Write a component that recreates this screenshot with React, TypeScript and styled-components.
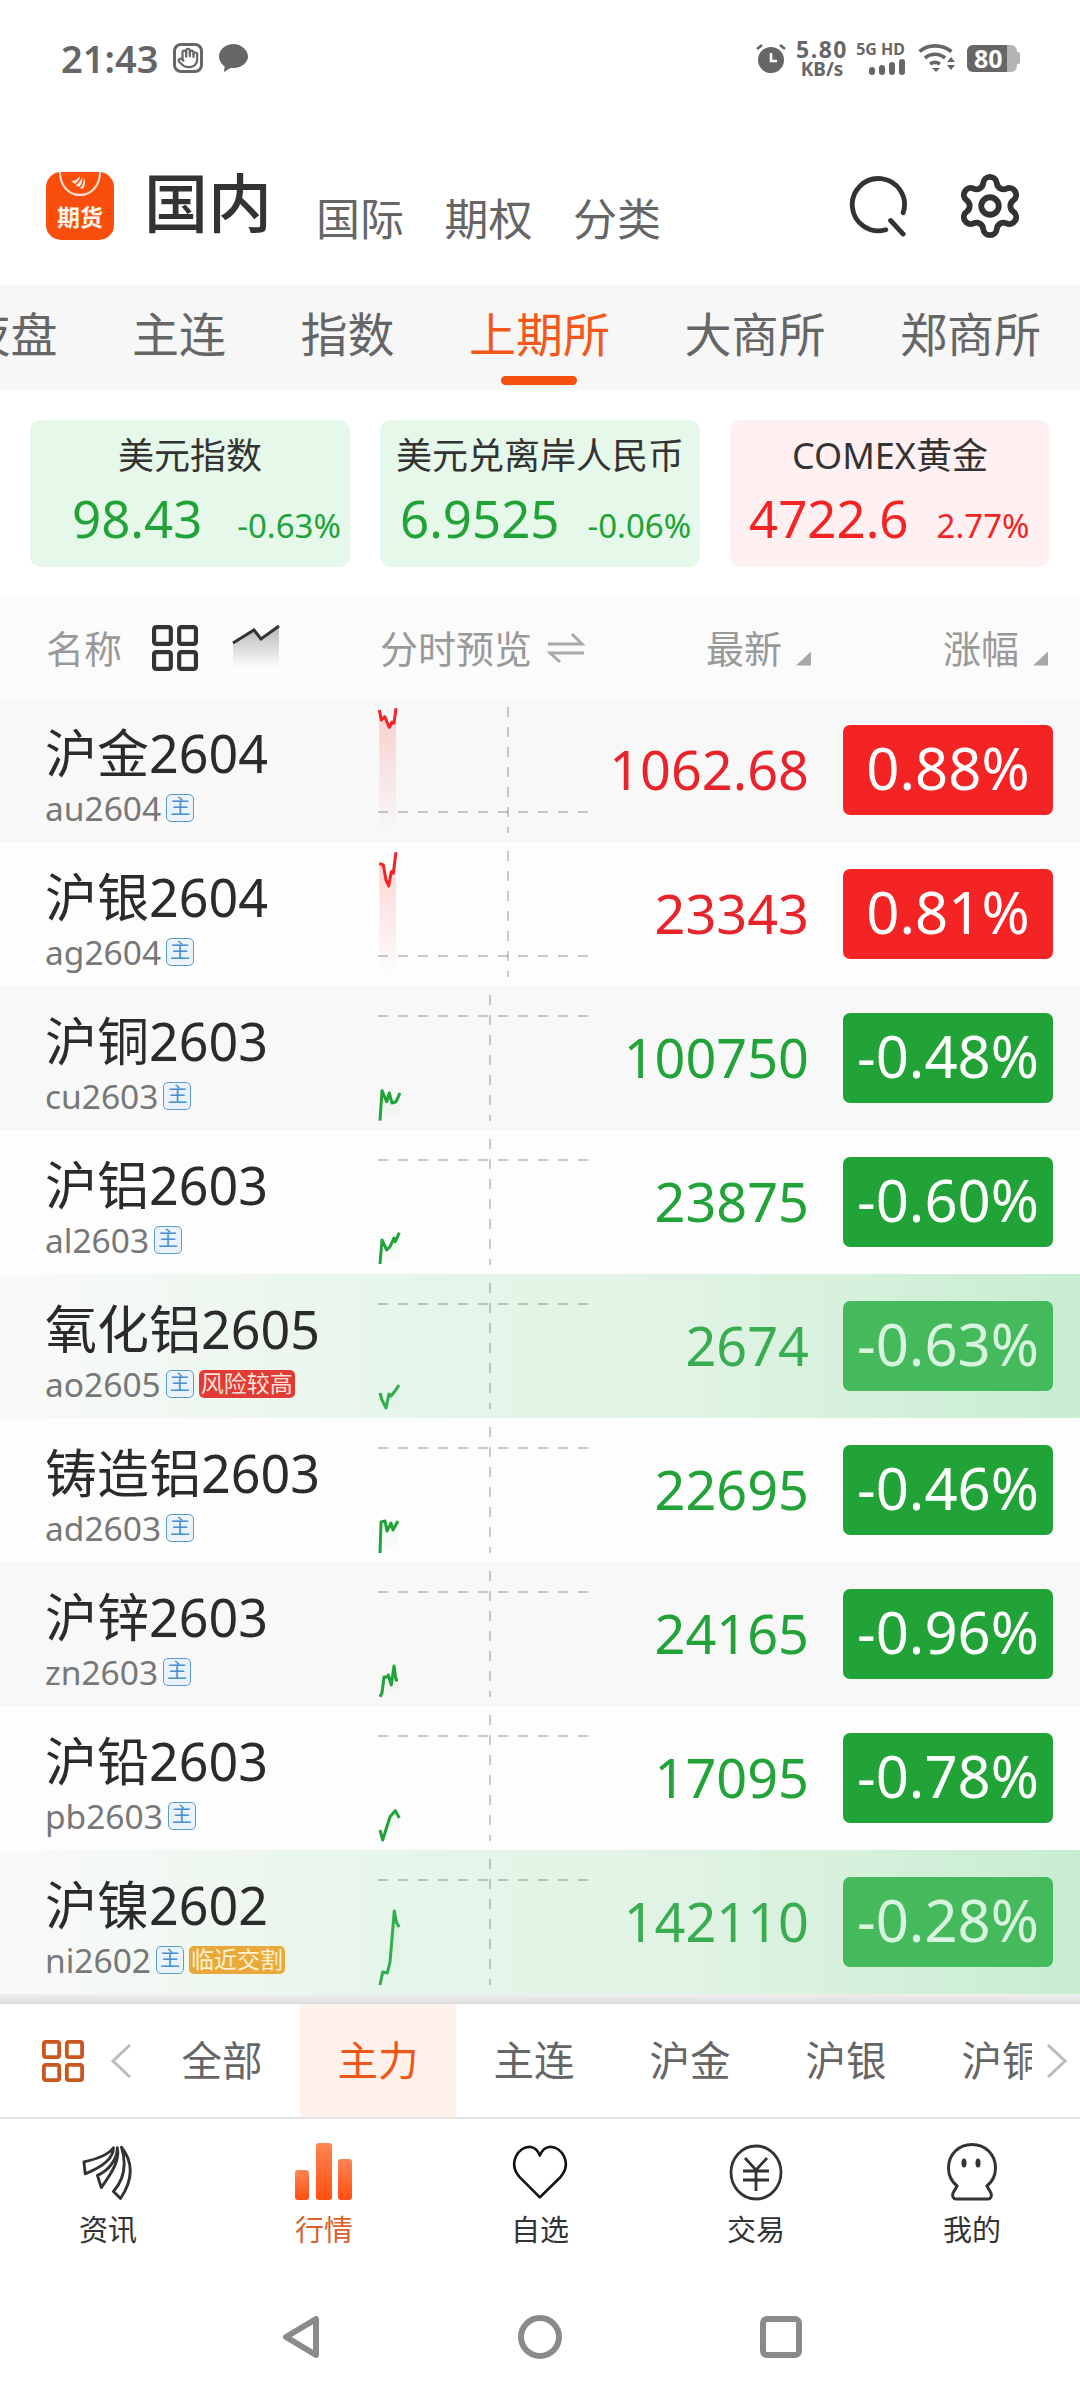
import React from "react";
import styled, { createGlobalStyle } from "styled-components";
import { Hand, Settings } from "lucide-react";

const GREEN = "#21a338";
const RED = "#f52424";

const GlobalStyle = createGlobalStyle`
  html, body {
    margin: 0;
    padding: 0;
    background: #fff;
  }
  body {
    font-family: "Noto Sans", "Noto Sans CJK SC", sans-serif;
  }
  * {
    box-sizing: border-box;
  }
`;

const Page = styled.div`
  width: 1080px;
  height: 2400px;
  display: flex;
  flex-direction: column;
  overflow: hidden;
  background: #fff;
`;

const StatusBar = styled.div`
  height: 116px;
  display: flex;
  align-items: center;
  justify-content: space-between;
  padding: 0 60px 0 61px;
  color: #666;
`;

const StatusGroup = styled.div`
  display: flex;
  align-items: center;
`;

const Clock = styled.span`
  font-size: 38px;
  font-weight: 600;
  line-height: 40px;
  margin-right: 15px;
`;

const HandBox = styled.div`
  width: 30px;
  height: 30px;
  border: 3px solid #666;
  border-radius: 8px;
  display: flex;
  align-items: center;
  justify-content: center;
  margin-right: 15px;
`;

const Speed = styled.div`
  display: flex;
  flex-direction: column;
  align-items: center;
  width: 50px;
  margin: 0 10px 0 11px;
  font-weight: 700;
`;

const SpeedValue = styled.span`
  font-size: 23px;
  line-height: 21px;
  letter-spacing: 1.5px;
`;

const SpeedUnit = styled.span`
  font-size: 19px;
  line-height: 18px;
`;

const NetInfo = styled.div`
  width: 48px;
  display: flex;
  flex-direction: column;
  align-items: flex-end;
  gap: 3px;
  margin-right: 13px;
`;

const NetLabel = styled.span`
  font-size: 16px;
  line-height: 14px;
  font-weight: 700;
  white-space: nowrap;
`;

const Battery = styled.div`
  width: 50px;
  height: 27px;
  margin-left: 12px;
  border-radius: 6px;
  background: linear-gradient(90deg, #666 0 40px, #b3b3b3 40px);
  color: #fff;
  font-size: 25px;
  font-weight: 700;
  line-height: 27px;
  padding-left: 7px;
`;

const BatteryNub = styled.div`
  width: 3px;
  height: 12px;
  background: #b3b3b3;
  border-radius: 0 2px 2px 0;
`;

const Header = styled.div`
  height: 169px;
  display: flex;
  align-items: flex-end;
  padding: 0 0 45px 46px;
`;

const LogoBox = styled.div`
  position: relative;
  width: 68px;
  height: 68px;
  border-radius: 15px;
  background: #fa4f0c;
  overflow: hidden;
  display: flex;
  justify-content: center;
  align-items: flex-end;
  padding-bottom: 10px;
`;

const LogoArc = styled.svg`
  position: absolute;
  top: 0;
  left: 0;
`;

const LogoText = styled.span`
  color: #fff6ee;
  font-size: 23px;
  line-height: 26px;
  font-weight: 700;
`;

const MainTitle = styled.span`
  font-size: 64px;
  line-height: 70px;
  font-weight: 500;
  color: #333;
  margin: 0 44px 2px 30px;
`;

const SubTitle = styled.span`
  font-size: 44px;
  line-height: 48px;
  color: #666;
  margin: 0 40.5px -3px 0;
`;

const HeaderIcons = styled.div`
  margin-left: auto;
  display: flex;
  align-items: center;
  gap: 46px;
  padding-right: 55px;
  height: 68px;
`;

const TabBar = styled.div`
  height: 105px;
  background: #f7f7f7;
  display: flex;
  gap: 74.5px;
  padding-top: 21px;
  overflow: hidden;
`;

const Tab = styled.div<{ $active?: boolean }>`
  position: relative;
  flex: none;
  font-size: 47px;
  line-height: 56px;
  color: ${(p) => (p.$active ? "#f5571a" : "#666")};
  &:first-child {
    margin-left: -36.5px;
  }
`;

const TabMark = styled.div`
  position: absolute;
  left: 32px;
  top: 70px;
  width: 76px;
  height: 9px;
  border-radius: 5px;
  background: #f5500f;
`;

const Cards = styled.div`
  display: grid;
  grid-template-columns: repeat(3, 320px);
  column-gap: 30px;
  padding: 30px 30px;
`;

const Card = styled.div<{ $up?: boolean }>`
  height: 147px;
  border-radius: 11px;
  background: ${(p) => (p.$up ? "#fff1f1" : "#e5f8e9")};
  color: ${(p) => (p.$up ? RED : GREEN)};
`;

const CardLabel = styled.div`
  text-align: center;
  color: #333;
  font-size: 36px;
  line-height: 44px;
  padding-top: 14px;
  height: 58px;
  white-space: nowrap;
`;

const CardNumbers = styled.div<{ $pad: number; $gap: number }>`
  display: flex;
  align-items: baseline;
  gap: ${(p) => p.$gap}px;
  margin-top: 8px;
  padding-left: ${(p) => p.$pad}px;
  white-space: nowrap;
`;

const CardValue = styled.span`
  font-size: 51px;
  line-height: 64px;
`;

const CardPct = styled.span`
  font-size: 33px;
  line-height: 40px;
`;

const ListHead = styled.div`
  height: 101px;
  background: #fbfbfb;
  display: grid;
  grid-template-columns: 380px 326px 237px 137px;
  align-items: center;
  color: #999;
  font-size: 38px;
`;

const HeadCell = styled.div<{ $indent?: number }>`
  display: flex;
  align-items: center;
  padding-left: ${(p) => p.$indent || 0}px;
  line-height: 46px;
  white-space: nowrap;
`;

const HeadGlyph = styled.span<{ $gap: number; $lift?: number }>`
  display: flex;
  margin-left: ${(p) => p.$gap}px;
  margin-top: ${(p) => -(p.$lift || 0)}px;
`;

const SortMark = styled.div`
  width: 15px;
  height: 14px;
  background: #a8a8a8;
  clip-path: polygon(100% 0, 100% 100%, 0 100%);
  margin: 22px 0 0 14px;
`;

const List = styled.div`
  display: flex;
  flex-direction: column;
`;

const Row = styled.div<{ $odd: boolean; $hot?: boolean }>`
  height: 144px;
  display: grid;
  grid-template-columns: 378px 212px 253px 210px;
  align-items: center;
  background: ${(p) =>
    p.$hot
      ? "linear-gradient(90deg, #fafafa 0%, #e8f6eb 32%, #e0f3e4 65%, #c8edd1 100%)"
      : p.$odd
      ? "#f8f8f8"
      : "#fdfdfd"};
`;

const NameCell = styled.div`
  align-self: start;
  padding: 27px 0 0 45px;
`;

const Name = styled.div`
  font-size: 52px;
  line-height: 56px;
  color: #2b2b2b;
  white-space: nowrap;
`;

const CodeLine = styled.div`
  display: flex;
  align-items: center;
  gap: 5px;
  margin-top: 11px;
  height: 32px;
`;

const Code = styled.span`
  font-size: 33.5px;
  line-height: 32px;
  color: #777;
`;

const MainBadge = styled.span`
  width: 28px;
  height: 28px;
  border: 1.5px solid #5a9ad6;
  border-radius: 5px;
  background: #eaf3fb;
  color: #4a8fd0;
  font-size: 20px;
  line-height: 24px;
  text-align: center;
`;

const WarnBadge = styled.span<{ $color: string; $text: string }>`
  height: 28px;
  padding: 0 2px;
  border-radius: 5px;
  background: ${(p) => p.$color};
  color: ${(p) => p.$text};
  font-size: 23px;
  line-height: 27px;
  white-space: nowrap;
`;

const Price = styled.div<{ $color: string }>`
  text-align: right;
  padding: 0 34px 2px 0;
  font-size: 54px;
  line-height: 64px;
  color: ${(p) => p.$color};
`;

const Chip = styled.div<{ $bg: string; $text: string }>`
  height: 90px;
  border-radius: 7px;
  background: ${(p) => p.$bg};
  color: ${(p) => p.$text};
  font-size: 58px;
  line-height: 86px;
  text-align: center;
  white-space: nowrap;
`;

const ShadowBand = styled.div`
  height: 10px;
  background: linear-gradient(180deg, #f0f0f0, #dcdcdc);
`;

const Strip = styled.div`
  height: 115px;
  display: flex;
  border-bottom: 2px solid #e4e4e4;
`;

const StripLead = styled.div`
  width: 144px;
  flex: none;
  display: flex;
  align-items: center;
  padding-left: 42px;
  gap: 26px;
`;

const StripScroller = styled.div`
  width: 888px;
  flex: none;
  display: flex;
  overflow: hidden;
`;

const StripTab = styled.div<{ $active?: boolean }>`
  width: 156px;
  flex: none;
  text-align: center;
  font-size: 40.5px;
  line-height: 114px;
  color: ${(p) => (p.$active ? "#f0561a" : "#666")};
  background: ${(p) => (p.$active ? "#fff1ec" : "transparent")};
`;

const StripTail = styled.div`
  flex: 1;
  display: flex;
  align-items: center;
  padding-left: 14px;
`;

const BottomNav = styled.div`
  display: grid;
  grid-template-columns: repeat(5, 216px);
  padding-top: 24px;
  height: 196px;
`;

const NavItem = styled.div<{ $active?: boolean }>`
  display: flex;
  flex-direction: column;
  align-items: center;
  color: ${(p) => (p.$active ? "#d9622a" : "#333")};
`;

const NavIconSlot = styled.div`
  height: 58px;
  display: flex;
  align-items: center;
  justify-content: center;
`;

const NavLabel = styled.span`
  font-size: 29px;
  line-height: 34px;
  margin-top: 12px;
`;

const SystemNav = styled.div`
  display: flex;
  justify-content: center;
  align-items: center;
  gap: 198px;
  height: 44px;
  padding-left: 3px;
`;

const ChartSvg = styled.svg`
  display: block;
`;

type Pt = [number, number];

const Spark = ({
  pts,
  color,
  fillBottom,
  fillAlpha,
  vx,
  hy,
  id,
}: {
  pts: Pt[];
  color: string;
  fillBottom: number;
  fillAlpha: number;
  vx: number;
  hy: number;
  id: string;
}) => {
  const line = pts.map((p) => p.join(",")).join(" ");
  const area = `${pts[0][0]},${fillBottom} ${line} ${pts[pts.length - 1][0]},${fillBottom}`;
  return (
    <ChartSvg width="212" height="144" viewBox="0 0 212 144">
      <defs>
        <linearGradient id={id} x1="0" y1="0" x2="0" y2="1">
          <stop offset="0" stopColor={color} stopOpacity={fillAlpha} />
          <stop offset="1" stopColor={color} stopOpacity="0" />
        </linearGradient>
      </defs>
      <line x1="0" y1={hy} x2="212" y2={hy} stroke="#000" strokeOpacity="0.2" strokeWidth="2" strokeDasharray="10 10" />
      <line x1={vx} y1="9" x2={vx} y2="135" stroke="#000" strokeOpacity="0.2" strokeWidth="2" strokeDasharray="10 10" />
      <polygon points={area} fill={`url(#${id})`} />
      <polyline points={line} fill="none" stroke={color} strokeWidth="3" strokeLinejoin="round" />
    </ChartSvg>
  );
};

const GridIcon = ({ color, size }: { color: string; size: number }) => (
  <svg width={size} height={size} viewBox="0 0 44 44" fill="none" stroke={color} strokeWidth="4">
    <rect x="2" y="2" width="16" height="16" rx="2" />
    <rect x="26" y="2" width="16" height="16" rx="2" />
    <rect x="2" y="26" width="16" height="16" rx="2" />
    <rect x="26" y="26" width="16" height="16" rx="2" />
  </svg>
);

const rows = [
  { name: "沪金2604", code: "au2604", price: "1062.68", pct: "0.88%", up: true, vx: 130, hy: 114,
    pts: [[1.3, 12], [3.3, 22], [6.7, 18.7], [11.3, 29.3], [14, 24], [16, 25.3], [18, 10.3]] as Pt[] },
  { name: "沪银2604", code: "ag2604", price: "23343", pct: "0.81%", up: true, vx: 130, hy: 114,
    pts: [[1.3, 21.3], [5.3, 23], [8, 38], [10.7, 44], [13.3, 29.7], [15.3, 31.3], [18, 10.3]] as Pt[] },
  { name: "沪铜2603", code: "cu2603", price: "100750", pct: "-0.48%", vx: 112, hy: 30,
    pts: [[2, 134.7], [4, 104.7], [8.7, 115.7], [11.3, 107], [14, 117], [18, 115.7], [22, 107]] as Pt[] },
  { name: "沪铝2603", code: "al2603", price: "23875", pct: "-0.60%", vx: 112, hy: 30,
    pts: [[2, 134], [4, 110], [8.7, 120], [12, 116.7], [16, 108], [17.3, 111.7], [21.3, 102.7]] as Pt[] },
  { name: "氧化铝2605", code: "ao2605", price: "2674", pct: "-0.63%", hot: true, vx: 112, hy: 30,
    warn: { text: "风险较高", bg: "#e23a34", fg: "#ffe3dc" },
    pts: [[2, 119], [4, 126], [8, 134], [11, 120], [13, 122], [17, 117], [21, 111]] as Pt[] },
  { name: "铸造铝2603", code: "ad2603", price: "22695", pct: "-0.46%", vx: 112, hy: 30,
    pts: [[2, 135], [3, 104], [7, 103], [9, 113], [13, 105], [15, 112], [20, 103]] as Pt[] },
  { name: "沪锌2603", code: "zn2603", price: "24165", pct: "-0.96%", vx: 112, hy: 30,
    pts: [[2, 134.7], [4, 131], [6, 115], [9.3, 115], [10.3, 113], [13.3, 123], [16, 104], [18, 118], [20, 118]] as Pt[] },
  { name: "沪铅2603", code: "pb2603", price: "17095", pct: "-0.78%", vx: 112, hy: 30,
    pts: [[2, 124], [4.7, 134], [12, 110.7], [17.3, 104.7], [21.3, 112]] as Pt[] },
  { name: "沪镍2602", code: "ni2602", price: "142110", pct: "-0.28%", hot: true, vx: 112, hy: 30,
    warn: { text: "临近交割", bg: "#e8a93a", fg: "#fff2d2" },
    pts: [[2, 135], [4.7, 122], [9.3, 123], [12, 112], [16.3, 61], [18.7, 73], [21.3, 77]] as Pt[] },
];

const App = () => {
  return (
    <Page>
      <GlobalStyle />
      <StatusBar>
        <StatusGroup>
          <Clock>21:43</Clock>
          <HandBox>
            <Hand size={22} color="#666" strokeWidth={2.4} />
          </HandBox>
          <svg width="31" height="30" viewBox="0 0 31 30">
            <path d="M15.5 1C7.5 1 1 6.6 1 13.5c0 4 2.2 7.6 5.6 9.8L6 29l7-4.2c.8.1 1.6.2 2.5.2C23.5 25 30 19.4 30 13.5S23.5 1 15.5 1z" fill="#666" />
          </svg>
        </StatusGroup>
        <StatusGroup>
          <svg width="30" height="30" viewBox="0 0 30 30">
            <circle cx="15" cy="17" r="13" fill="#666" />
            <path d="M15 10v8h6" fill="none" stroke="#fff" strokeWidth="2.6" />
            <path d="M1 6l5-4M29 6l-5-4" stroke="#666" strokeWidth="2.6" />
          </svg>
          <Speed>
            <SpeedValue>5.80</SpeedValue>
            <SpeedUnit>KB/s</SpeedUnit>
          </Speed>
          <NetInfo>
            <NetLabel>5G HD</NetLabel>
            <svg width="36" height="16" viewBox="0 0 36 16" fill="#666">
              <rect x="0" y="8" width="6" height="8" rx="3" />
              <rect x="10" y="6" width="6" height="10" rx="3" />
              <rect x="20" y="3" width="6" height="13" rx="3" />
              <rect x="30" y="0" width="6" height="16" rx="3" />
            </svg>
          </NetInfo>
          <svg width="37" height="30" viewBox="0 0 37 30" fill="none" stroke="#666" strokeWidth="3.6">
            <path d="M1.5 8.5C10 1 24 1 33.5 8.5" />
            <path d="M7 15c6-5 14-5 20 0" />
            <path d="M12 21c3-2 7-2 10 0" />
            <path d="M14 25h8l-4 4z" fill="#666" stroke="none" />
            <path d="M29 19h8l-4-5zM29 22h8l-4 5z" fill="#666" stroke="none" />
          </svg>
          <Battery>80</Battery>
          <BatteryNub />
        </StatusGroup>
      </StatusBar>

      <Header>
        <LogoBox>
          <LogoArc width="68" height="68" viewBox="0 0 68 68" fill="none">
            <path d="M14 0c0 14 9 23 20 23S54 14 54 0" stroke="#ffe6d8" strokeWidth="2" />
            <path d="M25 9c3 0 7-2 9-5 0 3-2 6-5 8zM29 13c3-1 6-4 7-8 1 3 0 7-3 10zM34 16c2-2 4-6 4-10 2 3 1 8-1 11z" fill="#ffe6d8" />
          </LogoArc>
          <LogoText>期货</LogoText>
        </LogoBox>
        <MainTitle>国内</MainTitle>
        <SubTitle>国际</SubTitle>
        <SubTitle>期权</SubTitle>
        <SubTitle>分类</SubTitle>
        <HeaderIcons>
          <svg width="60" height="62" viewBox="0 0 62 62" fill="none" stroke="#333" strokeWidth="5" strokeLinecap="round">
            <path d="M38 55.5A27 27 0 1 1 56 38" />
            <path d="M43 46l13 14" />
          </svg>
          <Settings size={70} color="#333" strokeWidth={2} />
        </HeaderIcons>
      </Header>

      <TabBar>
        <Tab>夜盘</Tab>
        <Tab>主连</Tab>
        <Tab>指数</Tab>
        <Tab $active>
          上期所
          <TabMark />
        </Tab>
        <Tab>大商所</Tab>
        <Tab>郑商所</Tab>
      </TabBar>

      <Cards>
        <Card>
          <CardLabel>美元指数</CardLabel>
          <CardNumbers $pad={42} $gap={35}>
            <CardValue>98.43</CardValue>
            <CardPct>-0.63%</CardPct>
          </CardNumbers>
        </Card>
        <Card>
          <CardLabel>美元兑离岸人民币</CardLabel>
          <CardNumbers $pad={20} $gap={28}>
            <CardValue>6.9525</CardValue>
            <CardPct>-0.06%</CardPct>
          </CardNumbers>
        </Card>
        <Card $up>
          <CardLabel>COMEX黄金</CardLabel>
          <CardNumbers $pad={19} $gap={28}>
            <CardValue>4722.6</CardValue>
            <CardPct>2.77%</CardPct>
          </CardNumbers>
        </Card>
      </Cards>

      <ListHead>
        <HeadCell $indent={46}>
          名称
          <HeadGlyph $gap={30}>
            <GridIcon color="#333" size={46} />
          </HeadGlyph>
          <HeadGlyph $gap={34} $lift={4}>
            <svg width="48" height="42" viewBox="0 0 48 42" fill="none">
              <defs>
                <linearGradient id="trendFill" x1="0" y1="0" x2="0" y2="1">
                  <stop offset="0" stopColor="#999" stopOpacity="0.7" />
                  <stop offset="1" stopColor="#999" stopOpacity="0" />
                </linearGradient>
              </defs>
              <path d="M1 18L22 5l7 9L47 1v41H1z" fill="url(#trendFill)" />
              <path d="M1 18L22 5l7 9L47 1" stroke="#333" strokeWidth="3" />
            </svg>
          </HeadGlyph>
        </HeadCell>
        <HeadCell>
          分时预览
          <HeadGlyph $gap={15}>
            <svg width="38" height="32" viewBox="0 0 38 32" fill="none" stroke="#aaa" strokeWidth="3">
              <path d="M1 12h34L25 2" />
              <path d="M37 21H3l10 9" />
            </svg>
          </HeadGlyph>
        </HeadCell>
        <HeadCell>
          最新
          <SortMark />
        </HeadCell>
        <HeadCell>
          涨幅
          <SortMark />
        </HeadCell>
      </ListHead>

      <List>
        {rows.map((r, i) => {
          const lineColor = r.up ? RED : r.hot ? "#2fae4c" : GREEN;
          const priceColor = r.up ? "#e8232a" : r.hot ? "#3aad52" : GREEN;
          const chipBg = r.up ? RED : r.hot ? "#45ba5d" : GREEN;
          const chipText = r.hot ? "#d8f4de" : "#fff";
          return (
            <Row key={r.code} $odd={i % 2 === 0} $hot={r.hot}>
              <NameCell>
                <Name>{r.name}</Name>
                <CodeLine>
                  <Code>{r.code}</Code>
                  <MainBadge>主</MainBadge>
                  {r.warn && (
                    <WarnBadge $color={r.warn.bg} $text={r.warn.fg}>
                      {r.warn.text}
                    </WarnBadge>
                  )}
                </CodeLine>
              </NameCell>
              <Spark
                id={`spark-${r.code}`}
                pts={r.pts}
                color={lineColor}
                fillBottom={r.up ? 132 : 136}
                fillAlpha={r.up ? 0.2 : 0.08}
                vx={r.vx}
                hy={r.hy}
              />
              <Price $color={priceColor}>{r.price}</Price>
              <Chip $bg={chipBg} $text={chipText}>
                {r.pct}
              </Chip>
            </Row>
          );
        })}
      </List>
      <ShadowBand />

      <Strip>
        <StripLead>
          <GridIcon color="#c9581f" size={42} />
          <svg width="22" height="34" viewBox="0 0 22 34" fill="none" stroke="#bbb" strokeWidth="3">
            <path d="M20 1L3 17l17 16" />
          </svg>
        </StripLead>
        <StripScroller>
          <StripTab>全部</StripTab>
          <StripTab $active>主力</StripTab>
          <StripTab>主连</StripTab>
          <StripTab>沪金</StripTab>
          <StripTab>沪银</StripTab>
          <StripTab>沪铜</StripTab>
        </StripScroller>
        <StripTail>
          <svg width="22" height="34" viewBox="0 0 22 34" fill="none" stroke="#bbb" strokeWidth="3">
            <path d="M2 1l17 16L2 33" />
          </svg>
        </StripTail>
      </Strip>

      <BottomNav>
        <NavItem>
          <NavIconSlot>
            <svg width="52" height="57" viewBox="152 5 162 172" fill="none" stroke="#333" strokeWidth="9" strokeLinejoin="round">
              <path d="M158 58C195 50 235 35 250 14c0 26-25 56-88 81z" />
              <path d="M262 14c8 36-12 71-50 124l-12-38c35-15 62-50 62-86z" />
              <path d="M275 12c30 38 45 88-3 160l-22-22c35-40 40-90 25-138z" />
            </svg>
          </NavIconSlot>
          <NavLabel>资讯</NavLabel>
        </NavItem>
        <NavItem $active>
          <NavIconSlot>
            <svg width="58" height="58" viewBox="0 0 58 58">
              <defs>
                <linearGradient id="barFill" x1="0" y1="0" x2="0" y2="1">
                  <stop offset="0" stopColor="#ff8554" />
                  <stop offset="1" stopColor="#ff4f0f" />
                </linearGradient>
              </defs>
              <rect x="0" y="27" width="14" height="30" rx="3" fill="url(#barFill)" />
              <rect x="21" y="0" width="16" height="57" rx="3" fill="url(#barFill)" />
              <rect x="43" y="16" width="14" height="41" rx="3" fill="url(#barFill)" />
            </svg>
          </NavIconSlot>
          <NavLabel>行情</NavLabel>
        </NavItem>
        <NavItem>
          <NavIconSlot>
            <svg width="56" height="56" viewBox="85 5 165 170" fill="none" stroke="#111" strokeWidth="8" strokeLinejoin="round">
              <path d="M167 167L105 105C70 65 100 10 140 14c15 2 23 16 27 26 4-10 12-24 28-26 40-4 70 51 35 91z" />
            </svg>
          </NavIconSlot>
          <NavLabel>自选</NavLabel>
        </NavItem>
        <NavItem>
          <NavIconSlot>
            <svg width="54" height="57" viewBox="0 0 54 57" fill="none" stroke="#333" strokeWidth="2.8">
              <ellipse cx="27" cy="28.5" rx="25" ry="26.5" />
              <path d="M16 14l11 12 11-12M14 27h26M14 36h26M27 26v21" />
            </svg>
          </NavIconSlot>
          <NavLabel>交易</NavLabel>
        </NavItem>
        <NavItem>
          <NavIconSlot>
            <svg width="50" height="58" viewBox="0 0 50 58" fill="none" stroke="#333" strokeWidth="3">
              <path d="M10 43C4 38 1.5 31 1.5 25 1.5 11 12 1.5 25 1.5S48.5 11 48.5 25c0 6-2.5 13-8.5 18l4 7c1 3 0 6-3 6H9c-3 0-4-3-3-6z" />
              <ellipse cx="17" cy="20" rx="2.5" ry="4.5" fill="#333" stroke="none" />
              <ellipse cx="31" cy="20" rx="2.5" ry="4.5" fill="#333" stroke="none" />
            </svg>
          </NavIconSlot>
          <NavLabel>我的</NavLabel>
        </NavItem>
      </BottomNav>

      <SystemNav>
        <svg width="38" height="44" viewBox="0 0 38 44" fill="none" stroke="#8a8a8a" strokeWidth="6" strokeLinejoin="round">
          <path d="M34 4v36L4 22z" />
        </svg>
        <svg width="44" height="44" viewBox="0 0 44 44" fill="none" stroke="#8a8a8a" strokeWidth="6">
          <circle cx="22" cy="22" r="19" />
        </svg>
        <svg width="42" height="42" viewBox="0 0 42 42" fill="none" stroke="#8a8a8a" strokeWidth="6">
          <rect x="3" y="3" width="36" height="36" rx="4" />
        </svg>
      </SystemNav>
    </Page>
  );
};

export default App;
